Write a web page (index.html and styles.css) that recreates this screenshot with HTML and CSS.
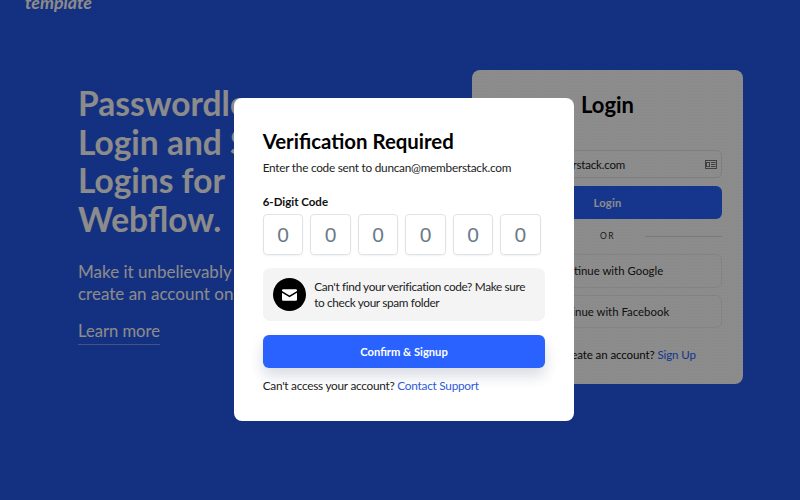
FILE: index.html
```html
<!DOCTYPE html>
<html lang="en">
<head>
<meta charset="utf-8">
<title>Verification Required</title>
<link rel="stylesheet" href="styles.css">
</head>
<body>
<div class="page">
  <header class="nav"><span class="logo">template</span></header>
  <main class="hero">
    <section class="intro">
      <h1 class="headline">Passwordless<br>Login and Signup<br>Logins for<br>Webflow.</h1>
      <p class="lead">Make it unbelievably easy to<br>create an account on Webflow</p>
      <a class="learn" href="#">Learn more</a>
    </section>
    <section class="login">
      <h2 class="login-title">Login</h2>
      <div class="field">
        <span class="field-text">duncan@memberstack.com</span>
        <svg class="id-icon" width="12" height="9" viewBox="0 0 12 9"><rect x=".5" y=".5" width="11" height="8" fill="none" stroke="currentColor"/><rect x="1.5" y="2.5" width="3" height="4" fill="none" stroke="currentColor"/><path d="M6 2.5h4.500M6 4.500h4.500M6 6.500h4.500" stroke="currentColor"/></svg>
      </div>
      <button class="login-btn">Login</button>
      <div class="or"><i></i><span>OR</span><i></i></div>
      <div class="social">Continue with Google</div>
      <div class="social">Continue with Facebook</div>
      <p class="signup">Need to create an account? <a href="#">Sign Up</a></p>
    </section>
  </main>
</div>
<div class="overlay">
  <div class="modal">
    <h2 class="modal-title">Verification Required</h2>
    <p class="modal-sub">Enter the code sent to duncan@memberstack.com</p>
    <div class="code-label">6-Digit Code</div>
    <div class="code-row">
      <div class="digit">0</div><div class="digit">0</div><div class="digit">0</div>
      <div class="digit">0</div><div class="digit">0</div><div class="digit">0</div>
    </div>
    <div class="note">
      <span class="note-icon">
        <svg width="15" height="12" viewBox="0 0 18 14"><path d="M1.500 0h15A1.500 1.500 0 0 1 18 1.500v.8L9 7.600 0 2.300v-.8A1.500 1.500 0 0 1 1.500 0z" fill="#fff"/><path d="M0 4.400l9 5.200 9-5.200V12.500a1.500 1.500 0 0 1-1.500 1.500h-15A1.500 1.500 0 0 1 0 12.500z" fill="#fff"/></svg>
      </span>
      <p>Can't find your verification code? Make sure to check your spam folder</p>
    </div>
    <button class="confirm">Confirm &amp; Signup</button>
    <p class="support">Can't access your account? <a href="#">Contact Support</a></p>
  </div>
</div>
</body>
</html>
```
FILE: styles.css
```css
* { box-sizing: border-box; }
html, body { margin: 0; height: 100%; }
body {
  position: relative;
  height: 500px;
  overflow: hidden;
  background: #2558ea;
  font-family: Lato, "Liberation Sans", sans-serif;
  color: #000;
}
h1, h2, p { margin: 0; }
button { border: 0; font: inherit; }
a { text-decoration: none; }

.page { height: 500px; padding: 0 57px 0 78px; }
.nav { height: 78px; margin-left: -53px; }
.logo {
  display: block;
  margin-top: -8px;
  font-size: 17.700px;
  line-height: 22px;
  font-weight: 700;
  font-style: italic;
  color: #fff;
}
.hero { display: flex; justify-content: space-between; align-items: flex-start; }

.intro { color: #fff; padding-top: 14px; }
.headline { font-size: 33.500px; line-height: 38.700px; font-weight: 700; white-space: nowrap; }
.lead { margin-top: 22px; font-size: 17px; line-height: 22px; white-space: nowrap; }
.learn {
  display: inline-block;
  margin-top: 16px;
  padding-bottom: 3px;
  border-bottom: 1px solid rgba(255,255,255,.4);
  font-size: 16.600px;
  line-height: 20px;
  color: #fff;
}

.login {
  width: 271px;
  height: 313.500px;
  padding: 22px 21px 0;
  border-radius: 8px;
  background: #fff;
}
.login-title { font-size: 22px; line-height: 26px; font-weight: 700; text-align: center; }
.field {
  display: flex;
  justify-content: space-between;
  align-items: center;
  height: 28px;
  margin-top: 32px;
  padding-right: 4px;
  border: 1px solid #e4e6ea;
  border-radius: 5px;
  font-size: 11.500px;
  letter-spacing: -.2px;
  color: #222;
}
.field-text { margin-left: -3px; }
.id-icon { color: #777; }
.login-btn {
  display: block;
  width: 100%;
  height: 32.500px;
  margin-top: 8px;
  border-radius: 6px;
  background: #2962ff;
  color: #fff;
  font-size: 11.200px;
  font-weight: 700;
  letter-spacing: .2px;
}
.or {
  display: flex;
  align-items: center;
  justify-content: space-between;
  margin-top: 11.500px;
  font-size: 8.500px;
  line-height: 12px;
  letter-spacing: 1.500px;
  color: #333;
}
.or i { width: 77px; height: 1px; background: #ddd; }
.social {
  height: 33.500px;
  margin-top: 7px;
  padding-left: 2px;
  border: 1px solid #eceef1;
  border-radius: 6px;
  font-size: 11.400px;
  line-height: 31.500px;
  text-align: center;
  color: #222;
}
.or + .social { margin-top: 12px; }
.signup { margin-top: 20px; font-size: 11.500px; line-height: 14px; letter-spacing: -.1px; text-align: center; color: #111; }
.signup a { color: #2962ff; }

.overlay {
  position: absolute;
  inset: 0;
  padding: 98px 0 0 234px;
  background-color: rgba(0,0,0,.45);
  background-image: radial-gradient(rgba(0,0,0,.03) .8px, transparent 1px);
  background-size: 3px 3px;
}
.modal {
  width: 340px;
  height: 323px;
  padding: 29px 28.700px 0;
  border-radius: 8px;
  background: #fff;
}
.modal-title { font-size: 20.400px; line-height: 28px; font-weight: 700; }
.modal-sub { margin-top: 5px; font-size: 11.800px; line-height: 16px; letter-spacing: -.25px; color: #222; }
.code-label { margin-top: 19px; font-size: 11.500px; line-height: 14px; font-weight: 700; color: #111; }
.code-row { display: flex; gap: 6.800px; margin-top: 5px; }
.digit {
  width: 40.700px;
  height: 41px;
  border: 1px solid #dfe3e8;
  border-radius: 4px;
  box-shadow: 0 1px 2px rgba(0,0,0,.05);
  font-size: 21px;
  line-height: 39px;
  font-family: "Liberation Sans", sans-serif;
  text-align: center;
  color: #6b7a88;
}
.note {
  display: flex;
  align-items: center;
  gap: 8.500px;
  height: 53px;
  margin-top: 13px;
  padding: 0 10px;
  border-radius: 7px;
  background: #f4f4f5;
  font-size: 11.800px;
  line-height: 16px;
  letter-spacing: -.35px;
  color: #222;
}
.note-icon {
  flex: none;
  display: flex;
  align-items: center;
  justify-content: center;
  width: 33px;
  height: 33px;
  border-radius: 50%;
  background: #000;
}
.confirm {
  display: block;
  width: 100%;
  height: 33px;
  margin-top: 14px;
  border-radius: 6px;
  background: #2962ff;
  box-shadow: 0 8px 14px rgba(20,40,90,.16);
  color: #fff;
  font-size: 11.200px;
  font-weight: 700;
}
.support { margin-top: 10px; font-size: 11.800px; line-height: 16px; letter-spacing: -.25px; color: #222; }
.support a { color: #2d5bd8; }
```
